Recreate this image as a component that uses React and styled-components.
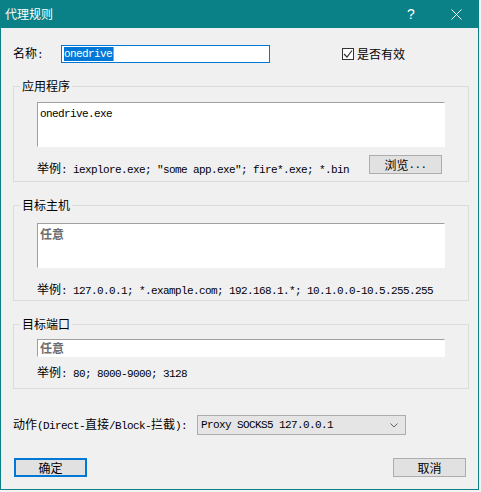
import React from 'react'
import styled, { createGlobalStyle } from 'styled-components'

const TEAL = '#0a8186'

const GlobalStyle = createGlobalStyle`
  html, body {
    margin: 0;
    padding: 0;
  }
  body {
    background: #f4f4f4;
    font-family: "Noto Sans CJK SC", "Liberation Sans", sans-serif;
    font-size: 12px;
    color: #000;
  }
`

const Window = styled.div`
  width: 479px;
  height: 490px;
  box-sizing: border-box;
  border: 1px solid ${TEAL};
  border-top: none;
  background: #f0f0f0;
  display: flex;
  flex-direction: column;
`

const TitleBar = styled.div`
  height: 28px;
  margin: 0 -1px;
  background: ${TEAL};
  display: flex;
  align-items: center;
  color: #fff;
`

const Title = styled.div`
  flex: 1;
  padding-left: 5px;
  font-size: 12px;
  line-height: 14px;
  padding-bottom: 1px;
`

const CaptionBtn = styled.div`
  width: ${p => p.$w}px;
  height: 28px;
  display: flex;
  align-items: center;
  justify-content: center;
  font-family: "Liberation Sans", sans-serif;
  font-size: 14px;
`

const Body = styled.div`
  padding: 17px 0 0 12px;
  display: flex;
  flex-direction: column;
`

const Row = styled.div`
  display: flex;
  align-items: center;
  height: ${p => p.$h}px;
  margin-top: ${p => p.$mt || 0}px;
`

const Label = styled.div`
  width: ${p => p.$w}px;
  line-height: 14px;
  white-space: nowrap;
`

const Mono = styled.span`
  font-family: "Liberation Mono", "DejaVu Sans Mono", monospace;
  font-size: 11px;
  letter-spacing: -0.6px;
`

const NameField = styled.div`
  width: 209px;
  height: 18px;
  box-sizing: border-box;
  border: 1px solid #0078d7;
  background: #fff;
  padding: 1px 2px;
  display: flex;
  align-items: center;
`

const Selection = styled(Mono)`
  background: #0078d7;
  color: #fff;
  line-height: 14px;
  height: 14px;
  padding-right: 0.6px;
`

const Caret = styled.span`
  width: 1px;
  height: 14px;
  background: #f7901e;
`

const Check = styled.label`
  margin-left: 72px;
  display: flex;
  align-items: center;
  gap: 3px;
  line-height: 14px;
`

const CheckBox = styled.span`
  width: 12px;
  height: 12px;
  box-sizing: border-box;
  border: 1px solid #333;
  background: #fff;
  display: flex;
  align-items: center;
  justify-content: center;
`

const Group = styled.fieldset`
  margin: ${p => p.$mt}px 0 0 0;
  width: 456px;
  box-sizing: border-box;
  border: 1px solid #dcdcdc;
  padding: 0;
  min-inline-size: auto;
`

const Legend = styled.legend`
  margin-left: 6px;
  padding: 0 2px;
  line-height: 14px;
  font-size: 12px;
`

const GroupInner = styled.div`
  padding: ${p => p.$pt}px 0 ${p => p.$pb}px 23px;
`

const EditBox = styled.div`
  width: 408px;
  height: ${p => p.$h}px;
  box-sizing: border-box;
  background: #fff;
  border: 1px solid #fff;
  border-top-color: #a0a0a0;
  border-left-color: #a0a0a0;
  padding: ${p => (p.$h > 20 ? 2 : 0)}px 2px 0 2px;
  line-height: 14px;
`

const Placeholder = styled.span`
  color: #6d6d6d;
  font-weight: 700;
  font-size: 12px;
  line-height: 16px;
`

const Hint = styled.div`
  margin-top: ${p => p.$mt}px;
  height: 14px;
  line-height: 14px;
  white-space: nowrap;
`

const HintRow = styled.div`
  width: 405px;
  margin-top: 8px;
  height: 19px;
  display: flex;
  justify-content: space-between;
  align-items: flex-start;
`

const PushButton = styled.button`
  width: 73px;
  height: 19px;
  box-sizing: border-box;
  padding: 0;
  margin: 0 0 0 ${p => p.$ml || 0}px;
  background: #e1e1e1;
  border: ${p => (p.$primary ? '2px solid #0078d7' : '1px solid #adadad')};
  font-family: "Noto Sans CJK SC", "Liberation Sans", sans-serif;
  font-size: 12px;
  line-height: 14px;
  color: #000;
  display: flex;
  align-items: center;
  justify-content: center;
`

const ComboBox = styled.div`
  width: 209px;
  height: 20px;
  box-sizing: border-box;
  border: 1px solid #adadad;
  background: #e5e5e5;
  padding: 0 7px 0 3px;
  display: flex;
  align-items: center;
  justify-content: space-between;
  line-height: 14px;
`

const Footer = styled.div`
  margin-top: 23px;
  padding-right: 12px;
  display: flex;
  justify-content: space-between;
`

export default function App() {
  return (
    <>
      <GlobalStyle />
      <Window>
        <TitleBar>
          <Title>代理规则</Title>
          <CaptionBtn $w={46}>?</CaptionBtn>
          <CaptionBtn $w={45}>
            <svg width="11" height="11" viewBox="0 0 11 11">
              <path d="M0.5 0.5 L10.5 10.5 M10.5 0.5 L0.5 10.5" stroke="#fff" strokeWidth="1" fill="none" />
            </svg>
          </CaptionBtn>
        </TitleBar>

        <Body>
          <Row $h={18}>
            <Label $w={48}>名称<Mono>:</Mono></Label>
            <NameField>
              <Selection>onedrive</Selection>
              <Caret />
            </NameField>
            <Check>
              <CheckBox>
                <svg width="10" height="10" viewBox="0 0 10 10">
                  <path d="M1 5 L4 8 L9 1.5" stroke="#333" strokeWidth="1.2" fill="none" />
                </svg>
              </CheckBox>
              是否有效
            </Check>
          </Row>

          <Group $mt={16}>
            <Legend>应用程序</Legend>
            <GroupInner $pt={9} $pb={7}>
              <EditBox $h={45}>
                <Mono>onedrive.exe</Mono>
              </EditBox>
              <HintRow>
                <Hint $mt={6}>
                  举例<Mono>: iexplore.exe; "some app.exe"; fire*.exe; *.bin</Mono>
                </Hint>
                <PushButton>浏览<Mono>...</Mono></PushButton>
              </HintRow>
            </GroupInner>
          </Group>

          <Group $mt={16}>
            <Legend>目标主机</Legend>
            <GroupInner $pt={11} $pb={4}>
              <EditBox $h={45}>
                <Placeholder>任意</Placeholder>
              </EditBox>
              <Hint $mt={14}>
                举例<Mono>: 127.0.0.1; *.example.com; 192.168.1.*; 10.1.0.0-10.5.255.255</Mono>
              </Hint>
            </GroupInner>
          </Group>

          <Group $mt={16}>
            <Legend>目标端口</Legend>
            <GroupInner $pt={8} $pb={9}>
              <EditBox $h={18}>
                <Placeholder>任意</Placeholder>
              </EditBox>
              <Hint $mt={8}>
                举例<Mono>: 80; 8000-9000; 3128</Mono>
              </Hint>
            </GroupInner>
          </Group>

          <Row $h={20} $mt={26}>
            <Label $w={184}>
              动作<Mono>(Direct-</Mono>直接<Mono>/Block-</Mono>拦截<Mono>):</Mono>
            </Label>
            <ComboBox>
              <Mono>Proxy SOCKS5 127.0.0.1</Mono>
              <svg width="8" height="5" viewBox="0 0 8 5">
                <path d="M0.5 0.5 L4 4 L7.5 0.5" stroke="#606060" strokeWidth="1" fill="none" />
              </svg>
            </ComboBox>
          </Row>

          <Footer>
            <PushButton $primary $ml={1}>确定</PushButton>
            <PushButton>取消</PushButton>
          </Footer>
        </Body>
      </Window>
    </>
  )
}
